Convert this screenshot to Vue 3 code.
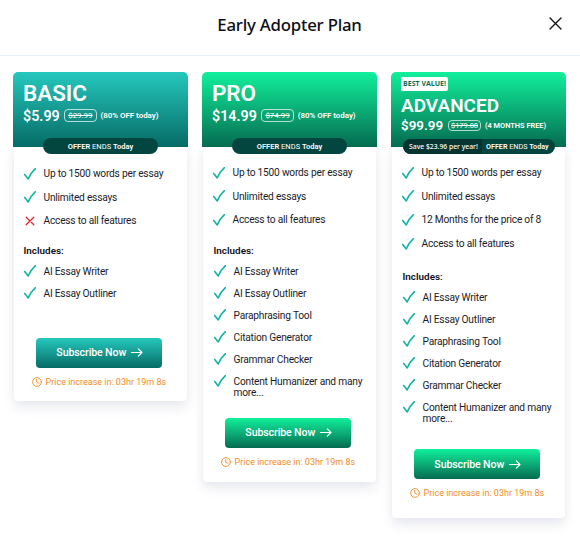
<script setup>
const tools = [
  'AI Essay Writer',
  'AI Essay Outliner',
  'Paraphrasing Tool',
  'Citation Generator',
  'Grammar Checker',
  'Content Humanizer and many more...',
]

const plans = [
  {
    id: 'basic',
    name: 'BASIC',
    price: '$5.99',
    was: '$29.99',
    note: '(80% OFF today)',
    features: [
      { text: 'Up to 1500 words per essay', ok: true },
      { text: 'Unlimited essays', ok: true },
      { text: 'Access to all features', ok: false },
    ],
    includes: tools.slice(0, 2),
  },
  {
    id: 'pro',
    name: 'PRO',
    price: '$14.99',
    was: '$74.99',
    note: '(80% OFF today)',
    features: [
      { text: 'Up to 1500 words per essay', ok: true },
      { text: 'Unlimited essays', ok: true },
      { text: 'Access to all features', ok: true },
    ],
    includes: tools,
  },
  {
    id: 'advanced',
    name: 'ADVANCED',
    badge: 'BEST VALUE!',
    saving: 'Save $23.96 per year!',
    price: '$99.99',
    was: '$179.88',
    note: '(4 MONTHS FREE)',
    features: [
      { text: 'Up to 1500 words per essay', ok: true },
      { text: 'Unlimited essays', ok: true },
      { text: '12 Months for the price of 8', ok: true },
      { text: 'Access to all features', ok: true },
    ],
    includes: tools,
  },
]
</script>

<template>
  <div class="modal">
    <header class="top">
      <h1>Early Adopter Plan</h1>
      <button class="close" aria-label="Close">
        <svg width="13" height="13" viewBox="0 0 13 13"><path d="M1 1L12 12M12 1L1 12" /></svg>
      </button>
    </header>

    <main class="plans">
      <section v-for="p in plans" :key="p.id" class="card" :class="p.id">
        <div class="head">
          <div v-if="p.badge" class="badge">{{ p.badge }}</div>
          <h2>{{ p.name }}</h2>
          <div class="pricing">
            <span class="price">{{ p.price }}</span>
            <span class="was"><s>{{ p.was }}</s></span>
            <span class="note">{{ p.note }}</span>
          </div>
          <div class="pill">
            <span v-if="p.saving" class="saving">{{ p.saving }}</span>
            <span class="offer"><b>OFFER</b> ENDS <b>Today</b></span>
          </div>
        </div>

        <div class="body">
          <ul class="features">
            <li v-for="f in p.features" :key="f.text">
              <svg v-if="f.ok" class="check" viewBox="0 0 12 12"><path d="M.7 6.500L4.200 10.900C6 7 8.500 3.300 11.400 .7" /></svg>
              <svg v-else class="cross" viewBox="0 0 12 12"><path d="M2.200 2.200L9.800 9.800M9.800 2.200L2.200 9.800" /></svg>
              <span>{{ f.text }}</span>
            </li>
          </ul>
          <h3>Includes:</h3>
          <ul class="tools">
            <li v-for="t in p.includes" :key="t">
              <svg class="check" viewBox="0 0 12 12"><path d="M.7 6.500L4.200 10.900C6 7 8.500 3.300 11.400 .7" /></svg>
              <span>{{ t }}</span>
            </li>
          </ul>
          <button class="subscribe">
            <span>Subscribe Now</span>
            <svg width="12" height="9" viewBox="0 0 12 9"><path d="M.5 4.500H11M7.300 .8L11 4.500L7.300 8.200" /></svg>
          </button>
          <div class="timer">
            <svg width="10" height="10" viewBox="0 0 11 11"><circle cx="5.500" cy="5.500" r="4.800" /><path d="M5.200 2.700V5.800L7.400 6.800" /></svg>
            <span>Price increase in: 03hr 19m 8s</span>
          </div>
        </div>
      </section>
    </main>
  </div>
</template>

<style>
body { background: #fff; }
</style>

<style scoped>
* { box-sizing: border-box; margin: 0; padding: 0; }
.modal {
  width: 580px;
  height: 546px;
  overflow: hidden;
  background: #fff;
  font-family: Roboto, "Liberation Sans", sans-serif;
  color: #1b1c28;
}
.top {
  display: grid;
  grid-template-columns: 1fr auto 1fr;
  height: 56px;
  padding: 0 18px 0 17px;
  border-bottom: 1px solid #e6edf3;
}
h1 {
  grid-column: 2;
  padding-top: 13px;
  font: 500 16.800px/24px "Noto Sans", "Open Sans", sans-serif;
  letter-spacing: -.22px;
  color: #0d0e19;
  white-space: nowrap;
}
button { border: 0; background: none; font-family: inherit; }
svg { flex: none; fill: none; stroke-linecap: round; stroke-linejoin: round; }
.close { justify-self: end; align-self: start; height: 13px; margin-top: 17px; }
.close svg { display: block; stroke: #15151c; stroke-width: 1.400; }

.plans {
  display: grid;
  grid-template-columns: repeat(3, 175px);
  gap: 14px;
  align-items: start;
  padding: 16px 13px 0;
}
.head {
  position: relative;
  height: 75px;
  padding: 9px 10px 0;
  border-radius: 5px 5px 0 0;
  background: linear-gradient(#11f09c, #056b50);
  color: #fff;
}
.basic .head { background: linear-gradient(#25c8bd, #066b65); }
h2 { font-size: 22.400px; line-height: 24px; font-weight: 600; }
.pricing { display: flex; align-items: center; height: 21px; white-space: nowrap; }
.price { font-size: 14.300px; font-weight: 600; }
.was {
  height: 13px;
  margin-left: 4.500px;
  padding: 0 3px;
  border: 1px solid #ffffffb0;
  border-radius: 4px;
  font-size: 7.900px;
  line-height: 11px;
}
.note { margin-left: 4px; font-size: 7.900px; font-weight: 600; }
.badge {
  width: 47px;
  height: 14px;
  border-radius: 2px;
  background: #fff;
  color: #087052;
  font: 700 7px/14px "Open Sans", sans-serif;
  text-align: center;
  white-space: nowrap;
}
.advanced .head { padding-top: 5px; }
.advanced h2 { margin-top: 5px; font-size: 19px; line-height: 20px; }
.advanced .pricing { height: 19px; }
.advanced .price { font-size: 13.400px; }
.advanced .was { height: 11px; padding: 0 2.500px; line-height: 9px; font-size: 7.400px; }
.advanced .note { margin-left: 3.500px; font-size: 7.400px; }
.pill {
  position: absolute;
  left: 30px;
  top: 66px;
  display: flex;
  width: 115px;
  height: 16px;
  border-radius: 8px;
  overflow: hidden;
  background: #03453f;
  font-size: 7.500px;
  line-height: 17px;
  white-space: nowrap;
}
.pill b { font-weight: 600; }
.offer { flex: 1; text-align: center; }
.advanced .pill { left: 12px; top: 67px; width: 152px; height: 15px; line-height: 15px; }
.advanced .offer { flex: none; padding-left: 4px; font-size: 7.200px; }
.saving { width: 79px; padding-left: 6px; background: #063431; font-family: "Noto Sans", sans-serif; font-size: 6.800px; font-weight: 500; }

.body {
  display: flex;
  flex-direction: column;
  margin: 0 1px;
  padding-top: 14px;
  border-radius: 0 0 4px 4px;
  background: #fff;
  box-shadow: 0 7px 12px #26306017, 0 0 8px #2630600a;
}
.basic .body { height: 254px; padding-top: 15px; }
.pro .body { height: 335px; }
.advanced .body { height: 371px; }
ul { list-style: none; }
.features { padding-left: 10px; }
.features li { display: flex; align-items: center; gap: 7.500px; height: 23.600px; font-size: 10.200px; letter-spacing: -.22px; white-space: nowrap; }
.check, .cross { width: 12px; height: 12px; }
.check { stroke: #13b3a4; stroke-width: 1.600; }
.cross { stroke: #e0262e; stroke-width: 1.300; }
h3 { margin-top: 13px; padding-left: 10.500px; font-size: 9.900px; line-height: 12px; font-weight: 600; color: #10111b; }
.basic h3 { margin-top: 12px; padding-left: 9.500px; }
.advanced h3 { margin-top: 16px; }
.tools { margin-top: 4px; padding-left: 11px; }
.basic .tools { padding-left: 10px; }
.tools li { display: flex; gap: 7.500px; min-height: 22px; padding: 5px 10px 5px 0; font-size: 10.200px; line-height: 11px; letter-spacing: -.22px; }
.tools .check { margin-top: -1px; }
.subscribe {
  display: flex;
  flex: none;
  align-items: center;
  justify-content: center;
  gap: 4.500px;
  width: 126px;
  height: 30px;
  margin: 15px 0 0 22px;
  padding-left: 1px;
  border-radius: 4px;
  background: linear-gradient(#11f09c, #056b50);
  color: #fff;
  font-size: 10.600px;
  letter-spacing: -.12px;
  font-weight: 500;
}
.basic .subscribe { margin-top: 33px; background: linear-gradient(#25c8bd, #066b65); }
.advanced .subscribe { margin-top: 20px; }
.subscribe svg { stroke: #fff; stroke-width: 1.100; }
.timer {
  display: flex;
  align-items: center;
  gap: 3.500px;
  height: 12px;
  margin: 8px 0 0 18px;
  color: #f38b20;
  font-size: 9px;
  white-space: nowrap;
}
.timer svg { stroke: #f38b20; stroke-width: 1; }
</style>
